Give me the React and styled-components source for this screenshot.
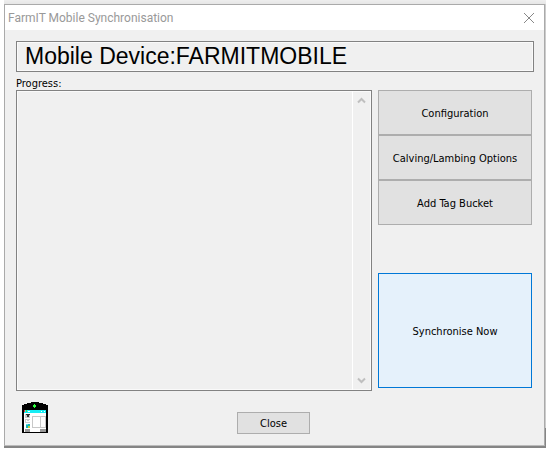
import React from 'react';
import styled, { createGlobalStyle } from 'styled-components';

const controlFont = "'DejaVu Sans Condensed', 'DejaVu Sans', sans-serif";

const GlobalStyle = createGlobalStyle`
  * {
    box-sizing: border-box;
  }

  body {
    margin: 0;
    background: #fff;
    font-family: Roboto, 'Open Sans', sans-serif;
  }
`;

const Desktop = styled.div`
  margin: 0 1px 6px 4px;
  padding: 4px 1px 2px 0;
  background: linear-gradient(#eee 0, #e6e6e6 4px, #ccc 4px, #ccc 428px, #858585 428px);
`;

const Window = styled.main`
  display: flex;
  flex-direction: column;
  border: 1px solid #aaa;
  border-bottom-color: #bbb;
  background: #f0f0f0;
`;

const TitleBar = styled.header`
  display: flex;
  align-items: center;
  justify-content: space-between;
  height: 25px;
  padding: 0 9px 0 3px;
  background: #fff;
`;

const Title = styled.h1`
  margin: 0;
  color: #999;
  font-size: 12px;
  font-weight: 400;
  line-height: 16px;
`;

const CloseIcon = styled.button`
  display: flex;
  padding: 0;
  border: 0;
  background: none;
  color: #888;
`;

const Body = styled.div`
  padding: 11px 10px 11px 11px;
`;

const Device = styled.h2`
  margin: 0;
  padding: 0 8px;
  border: 1px solid #828282;
  box-shadow: inset 0 0 0 1px #fafafa;
  color: #000;
  font-family: 'Liberation Sans', Arial, sans-serif;
  font-size: 23px;
  font-weight: 400;
  line-height: 29px;
`;

const Label = styled.label`
  display: block;
  padding-top: 6px;
  font-family: ${controlFont};
  font-size: 11px;
  line-height: 12px;
`;

const Columns = styled.div`
  display: grid;
  grid-template-columns: 1fr 154px;
  gap: 6px;
  padding-right: 2px;
`;

const Memo = styled.div`
  display: flex;
  height: 301px;
  border: 1px solid #828282;
  box-shadow: inset 0 0 0 1px #fafafa;
`;

const Log = styled.textarea`
  flex: 1;
  min-width: 0;
  padding: 4px;
  border: 0;
  outline: 0;
  background: none;
  resize: none;
`;

const ScrollTrack = styled.div`
  display: flex;
  flex-direction: column;
  justify-content: space-between;
  align-items: center;
  width: 19px;
  padding: 6px 1px 6px 0;
  border-left: 1px solid #fff;
`;

const Actions = styled.div`
  display: flex;
  flex-direction: column;
`;

const Button = styled.button`
  height: 45px;
  padding: 2px 0 0;
  border: 1px solid #adadad;
  background: #e1e1e1;
  color: #000;
  font-family: ${controlFont};
  font-size: 11px;
  line-height: 14px;
`;

const SyncButton = styled(Button)`
  height: 115px;
  margin-top: 48px;
  border-color: #0078d7;
  background: #e5f1fb;
`;

const Footer = styled.footer`
  display: grid;
  grid-template-columns: 1fr 73px 1fr;
  align-items: start;
  padding: 11px 9px 0 6px;
`;

const CloseButton = styled(Button)`
  height: 22px;
  margin-top: 10px;
`;

const Chevron = ({ down }) => (
  <svg width="9" height="7" viewBox="0 0 9 7" aria-hidden="true">
    <path
      d={down ? 'M1 1.5L4.5 5L8 1.5' : 'M1 5.5L4.5 2L8 5.5'}
      fill="none"
      stroke="#bfbfbf"
      strokeWidth="2"
    />
  </svg>
);

const DeviceIcon = () => (
  <svg width="26" height="31" viewBox="0 0 26 31" shapeRendering="crispEdges" aria-hidden="true">
    <path d="M0 3H2V2H5V1H9V0H17V1H21V2H24V3H26V31H0Z" fill="#000" />
    <rect x="12" y="2" width="1" height="4" fill="#2cff3c" />
    <rect x="11" y="3" width="3" height="2" fill="#2cff3c" />
    <rect x="2" y="8" width="22" height="22" fill="#fff" />
    <rect x="2" y="8" width="22" height="3" fill="#18eef5" />
    <rect x="2" y="8" width="1" height="2" fill="#f33" />
    <rect x="4" y="8" width="1" height="2" fill="#6c3" />
    <rect x="6" y="9" width="2" height="1" fill="#fff" />
    <rect x="19" y="9" width="1" height="1" fill="#fff" />
    <rect x="22" y="9" width="1" height="1" fill="#fff" />
    <rect x="3" y="12" width="5" height="4" fill="#ccc" />
    <path d="M4 12h4v1h-1v2h-2v-2h-1z" fill="#333" />
    <rect x="3" y="17" width="5" height="4" fill="#ccc" />
    <path d="M4 18h1v1h2v-1h1v2h-4z" fill="#fff" />
    <rect x="4" y="22" width="4" height="4" fill="#16b5b5" />
    <rect x="4" y="22" width="2" height="1" fill="#58dce8" />
    <rect x="6" y="24" width="2" height="2" fill="#c6c936" />
    <rect x="10" y="14" width="14" height="12" fill="#c8c8c8" />
    <rect x="11" y="15" width="7" height="10" fill="#fff" />
    <rect x="19" y="15" width="4" height="10" fill="#fff" />
    <rect x="3" y="27" width="5" height="3" fill="#999" />
    <rect x="18" y="27" width="6" height="3" fill="#999" />
  </svg>
);

const App = () => (
  <>
    <GlobalStyle />
    <Desktop>
      <Window>
        <TitleBar>
          <Title>FarmIT Mobile Synchronisation</Title>
          <CloseIcon type="button" aria-label="Close window">
            <svg width="12" height="12" viewBox="0 0 12 12" aria-hidden="true">
              <path d="M1 1L11 11M11 1L1 11" stroke="currentColor" />
            </svg>
          </CloseIcon>
        </TitleBar>
        <Body>
          <Device>Mobile Device:FARMITMOBILE</Device>
          <Label htmlFor="progress">Progress:</Label>
          <Columns>
            <Memo>
              <Log id="progress" readOnly />
              <ScrollTrack>
                <Chevron />
                <Chevron down />
              </ScrollTrack>
            </Memo>
            <Actions>
              <Button type="button">Configuration</Button>
              <Button type="button">Calving/Lambing Options</Button>
              <Button type="button">Add Tag Bucket</Button>
              <SyncButton type="button">Synchronise Now</SyncButton>
            </Actions>
          </Columns>
          <Footer>
            <DeviceIcon />
            <CloseButton type="button">Close</CloseButton>
          </Footer>
        </Body>
      </Window>
    </Desktop>
  </>
);

export default App;
